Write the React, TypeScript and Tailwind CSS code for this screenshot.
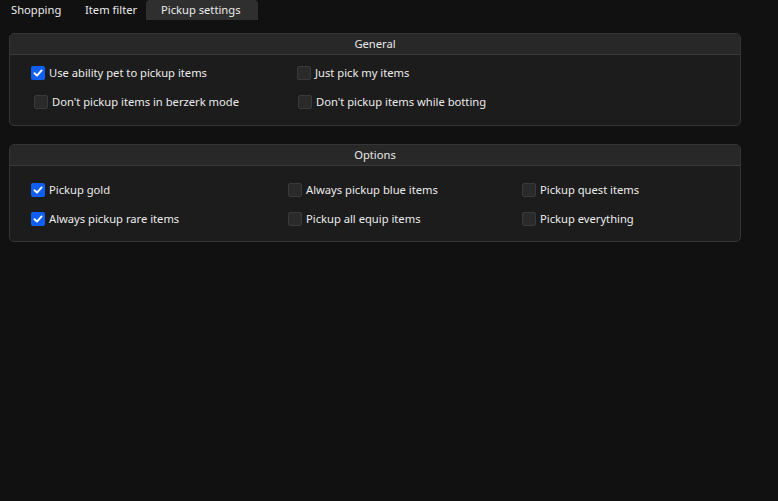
const font = { fontFamily: "'Noto Sans', 'Open Sans', sans-serif" };

function Check({ checked, label, className = '' }: { checked?: boolean; label: string; className?: string }) {
  return (
    <div className={`flex items-center gap-[4px] h-[14px] ${className}`}>
      {checked ? (
        <span className="w-[14px] h-[14px] rounded-[2px] bg-[#0f5ff5] flex items-center justify-center shrink-0">
          <svg width="10" height="10" viewBox="0 0 10 10">
            <polyline points="1.5,5.2 4,7.6 8.6,2.4" fill="none" stroke="#fff" strokeWidth="1.9" strokeLinecap="round" strokeLinejoin="round" />
          </svg>
        </span>
      ) : (
        <span className="w-[14px] h-[14px] rounded-[2px] bg-[#2a2a2a] border border-[#3a3a3a] shrink-0" />
      )}
      <span className="text-[11.2px] text-[#ececec] leading-none whitespace-nowrap">{label}</span>
    </div>
  );
}

function Group({ title, children }: { title: string; children: React.ReactNode }) {
  return (
    <div className="mx-[9px] w-[732px] rounded-[5px] border border-[#353535] bg-[#1c1c1c] overflow-hidden">
      <div className="h-[21px] bg-[#282828] border-b border-[#3a3a3a] flex items-center justify-center text-[11.2px] text-[#e8e8e8]">
        {title}
      </div>
      {children}
    </div>
  );
}

export default function App() {
  return (
    <div className="w-[778px] h-[501px] bg-[#111111] overflow-hidden" style={font}>
      <div className="h-[20px] flex items-end text-[11.2px] text-[#ececec]">
        <div className="w-[74px] pl-[11px] h-[20px] flex items-center">Shopping</div>
        <div className="w-[72px] pl-[11px] h-[20px] flex items-center">Item filter</div>
        <div className="w-[112px] h-[20px] pl-[15px] flex items-center bg-[#2f2f2f] rounded-t-[4px]">Pickup settings</div>
      </div>

      <div className="mt-[13px]">
        <Group title="General">
          <div className="pt-[11px] pb-[16px] pl-[21px] grid grid-cols-[266px_1fr] gap-y-[15px]">
            <Check checked label="Use ability pet to pickup items" />
            <Check label="Just pick my items" />
            <Check label="Don't pickup items in berzerk mode" className="ml-[3px]" />
            <Check label="Don't pickup items while botting" className="ml-[1px]" />
          </div>
        </Group>
      </div>

      <div className="mt-[18px]">
        <Group title="Options">
          <div className="pt-[17px] pb-[15px] pl-[21px] grid grid-cols-[257px_234px_1fr] gap-y-[15px]">
            <Check checked label="Pickup gold" />
            <Check label="Always pickup blue items" />
            <Check label="Pickup quest items" />
            <Check checked label="Always pickup rare items" />
            <Check label="Pickup all equip items" />
            <Check label="Pickup everything" />
          </div>
        </Group>
      </div>
    </div>
  );
}
